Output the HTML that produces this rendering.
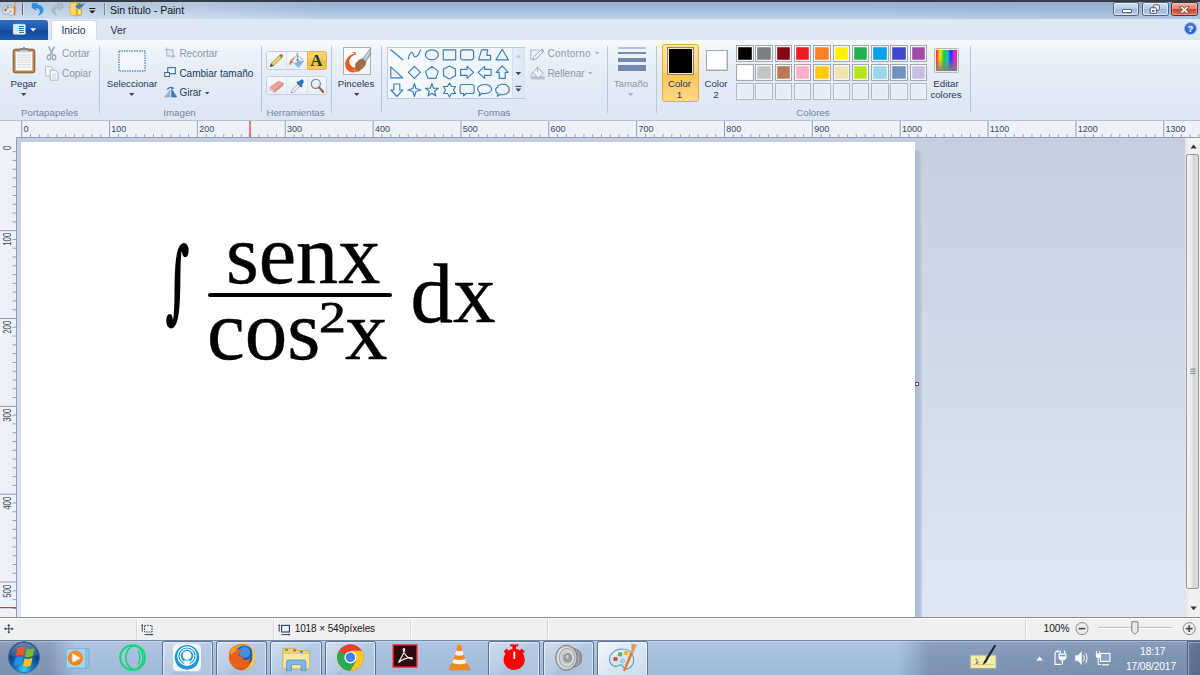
<!DOCTYPE html>
<html lang="es"><head><meta charset="utf-8"><title>Sin título - Paint</title><style>
html,body{margin:0;padding:0}
body{width:1200px;height:675px;overflow:hidden;position:relative;font-family:"Liberation Sans",sans-serif;font-size:10px;color:#1e395b;background:#fff}
.a{position:absolute}
.t{position:absolute;z-index:2;white-space:nowrap;line-height:12px;height:12px;transform-origin:0 50%}
.c{text-align:center}
.dis{color:#92969f}
.grp{color:#74849f}
.sep{position:absolute;width:1px;background:#b9c6d9;top:46px;height:67px}
svg{position:absolute;overflow:visible}
</style></head><body>

<div class="a" style="left:0;top:0;width:1200px;height:19px;background:linear-gradient(180deg,#95b0d2 0,#9db7d6 35%,#b0c7e2 75%,#bdd2e9 100%)"></div>
<div class="a" style="left:0;top:1px;width:330px;height:18px;background:linear-gradient(90deg,rgba(255,255,255,.28) 0,rgba(255,255,255,.26) 190px,rgba(255,255,255,0) 100%)"></div>
<div class="a" style="left:850px;top:1px;width:350px;height:18px;background:linear-gradient(90deg,rgba(60,100,160,0) 0,rgba(60,100,160,.10) 100%)"></div>
<div class="a" style="left:0;top:0;width:1200px;height:1.5px;background:#373b42"></div>
<div class="t" style="left:110px;top:3.5px;font-size:10.5px;color:#101820">Sin título - Paint</div>
<div class="a" style="left:1113.3px;top:2.3px;width:26.2px;height:14.2px;border:1px solid #56627a;background:linear-gradient(#cfdff1,#b4cbe6 48%,#9db9db 52%,#b3cbe6);box-sizing:border-box;border-radius:2.5px;box-shadow:inset 0 0 0 1px rgba(255,255,255,.55)"></div>
<div class="a" style="left:1142.3px;top:2.3px;width:26.4px;height:14.2px;border:1px solid #56627a;background:linear-gradient(#cfdff1,#b4cbe6 48%,#9db9db 52%,#b3cbe6);box-sizing:border-box;border-radius:2.5px;box-shadow:inset 0 0 0 1px rgba(255,255,255,.55)"></div>
<div class="a" style="left:1171.2px;top:2.3px;width:26.6px;height:14.2px;border:1px solid #5e2a24;background:linear-gradient(#eeb5a6,#dc8470 46%,#c4462c 54%,#d9745c);box-sizing:border-box;border-radius:2.5px;box-shadow:inset 0 0 0 1px rgba(255,235,225,.35)"></div>
<div class="a" style="left:1122px;top:9.2px;width:9.6px;height:3.4px;background:#fff;border:1px solid #59657c;border-radius:1px;box-sizing:border-box"></div>
<div class="a" style="left:0;top:19px;width:1200px;height:21px;background:linear-gradient(#dfe9f5,#dbe6f3)"></div>
<div class="a" style="left:0;top:39.5px;width:1200px;height:1px;background:#c9d6e8"></div>
<div class="a" style="left:0;top:20px;width:48px;height:20px;border-radius:0 3px 0 0;background:linear-gradient(#2c6fc4,#1a55a6 50%,#114896 51%,#1e5fb3)"></div>
<div class="a" style="left:51px;top:20px;width:46px;height:21px;border:1px solid #cfdaea;border-bottom:none;border-radius:3px 3px 0 0;box-sizing:border-box;background:linear-gradient(#ffffff,#f7fafd)"></div>
<div class="t" style="left:61.4px;top:24.5px;font-size:10.4px;color:#1e2c60">Inicio</div>
<div class="t" style="left:110.6px;top:24.5px;font-size:10.4px;color:#1e2c60">Ver</div>
<div class="a" style="left:0;top:40px;width:1200px;height:80px;background:linear-gradient(#f7fafd 0,#edf3fa 14%,#e4ecf7 40%,#dce6f3 100%)"></div>
<div class="a" style="left:0;top:120px;width:1200px;height:1px;background:#b4c2d6"></div>
<div class="sep" style="left:99px"></div>
<div class="sep" style="left:261px"></div>
<div class="sep" style="left:331px"></div>
<div class="sep" style="left:381px"></div>
<div class="sep" style="left:607px"></div>
<div class="sep" style="left:656px"></div>
<div class="sep" style="left:970px"></div>
<div class="t c " style="left:-26.5px;top:78px;width:100px;font-size:9.7px;">Pegar</div>
<div class="t dis" style="left:62px;top:48px;">Cortar</div>
<div class="t dis" style="left:62px;top:67.8px;">Copiar</div>
<div class="t c " style="left:82px;top:78px;width:100px;font-size:9.7px;">Seleccionar</div>
<div class="t dis" style="left:179.4px;top:48px;">Recortar</div>
<div class="t " style="left:179.4px;top:67.8px;">Cambiar tamaño</div>
<div class="t " style="left:179.4px;top:86.8px;">Girar</div>
<div class="t c " style="left:306px;top:78px;width:100px;font-size:9.7px;">Pinceles</div>
<div class="t dis" style="left:547.4px;top:48px;letter-spacing:.3px">Contorno</div>
<div class="t dis" style="left:547.4px;top:67.8px;">Rellenar</div>
<div class="t c dis" style="left:581px;top:78px;width:100px;font-size:9.7px;">Tamaño</div>
<div class="t c " style="left:629.5px;top:78px;width:100px;font-size:9.7px;">Color</div>
<div class="t c " style="left:629.5px;top:89px;width:100px;font-size:9.7px;">1</div>
<div class="t c " style="left:666px;top:78px;width:100px;font-size:9.7px;">Color</div>
<div class="t c " style="left:666px;top:89px;width:100px;font-size:9.7px;">2</div>
<div class="t c " style="left:896px;top:78px;width:100px;font-size:9.7px;">Editar</div>
<div class="t c " style="left:896px;top:89px;width:100px;font-size:9.7px;">colores</div>
<div class="t c grp" style="left:-0.5px;top:107px;width:100px;font-size:9.7px;">Portapapeles</div>
<div class="t c grp" style="left:129.5px;top:107px;width:100px;font-size:9.7px;">Imagen</div>
<div class="t c grp" style="left:245.5px;top:107px;width:100px;font-size:9.7px;">Herramientas</div>
<div class="t c grp" style="left:444px;top:107px;width:100px;font-size:9.7px;">Formas</div>
<div class="t c grp" style="left:763px;top:107px;width:100px;font-size:9.7px;">Colores</div>
<div class="a" style="left:387px;top:46.5px;width:138px;height:52px;box-sizing:border-box;border:1px solid #b9c9dd;background:linear-gradient(135deg,#f6f9fd,#edf3fa)"></div>
<div class="a" style="left:512px;top:47.5px;width:12px;height:50px;background:linear-gradient(90deg,#e3ebf6,#dbe5f2);border-left:1px solid #d3deec"></div>
<svg style="left:0px;top:0px" width="1200" height="120" viewBox="0 0 1200 120"><g fill="#edf4fb" fill-opacity=".8" stroke="#3c7db8" stroke-width="1.15" stroke-linejoin="round" stroke-linecap="round"><g transform="translate(396.8,54.8)"><path d="M-6,-5 L6,5"/></g><g transform="translate(414.4,54.8)"><path d="M-6,4 C-5,-3 -2,-4 -1,0 C0,4 4,2 6,-5"/></g><g transform="translate(431.9,54.8)"><ellipse cx="0" cy="0" rx="6.5" ry="5"/></g><g transform="translate(449.5,54.8)"><rect x="-6.2" y="-5" width="12.4" height="10"/></g><g transform="translate(467.1,54.8)"><rect x="-6.5" y="-5" width="13" height="10" rx="2.2"/></g><g transform="translate(484.6,54.8)"><path d="M-6,5 L-3,-5 L3,-5 L2.2,0.5 L6,0.5 L6,5 Z"/></g><g transform="translate(502.2,54.8)"><path d="M0,-5.5 L6.2,5 L-6.2,5 Z"/></g><g transform="translate(396.8,72.4)"><path d="M-6,-5.5 L-6,5.5 L6,5.5 Z"/></g><g transform="translate(414.4,72.4)"><path d="M0,-6 L6,0 L0,6 L-6,0 Z"/></g><g transform="translate(431.9,72.4)"><path d="M0,-6 L6.5,-1 L4,6 L-4,6 L-6.5,-1 Z"/></g><g transform="translate(449.5,72.4)"><path d="M0,-6.5 L6,-3.3 L6,3.3 L0,6.5 L-6,3.3 L-6,-3.3 Z"/></g><g transform="translate(467.1,72.4)"><path d="M-6.5,-3 L0,-3 L0,-6 L6.5,0 L0,6 L0,3 L-6.5,3 Z"/></g><g transform="translate(484.6,72.4)"><path d="M6.5,-3 L0,-3 L0,-6 L-6.5,0 L0,6 L0,3 L6.5,3 Z"/></g><g transform="translate(502.2,72.4)"><path d="M-3,6 L-3,0 L-6,0 L0,-6.5 L6,0 L3,0 L3,6 Z"/></g><g transform="translate(396.8,90.0)"><path d="M-3,-6 L-3,0 L-6,0 L0,6.5 L6,0 L3,0 L3,-6 Z"/></g><g transform="translate(414.4,90.0)"><path d="M0,-6.5 L1.5,-1.5 L6.5,0 L1.5,1.5 L0,6.5 L-1.5,1.5 L-6.5,0 L-1.5,-1.5 Z"/></g><g transform="translate(431.9,90.0)"><path d="M0,-6.5 L1.6,-1.8 L6.5,-1.8 L2.6,1.2 L4,6 L0,3.2 L-4,6 L-2.6,1.2 L-6.5,-1.8 L-1.6,-1.8 Z"/></g><g transform="translate(449.5,90.0)"><path d="M0,-7 L2,-3.5 L6,-3.5 L4,0 L6,3.5 L2,3.5 L0,7 L-2,3.5 L-6,3.5 L-4,0 L-6,-3.5 L-2,-3.5 Z"/></g><g transform="translate(467.1,90.0)"><path d="M-5,-5.5 L5,-5.5 Q7,-5.5 7,-3.5 L7,1.5 Q7,3.5 5,3.5 L-1,3.5 L-3.5,6 L-3.5,3.5 L-5,3.5 Q-7,3.5 -7,1.5 L-7,-3.5 Q-7,-5.5 -5,-5.5 Z"/></g><g transform="translate(484.6,90.0)"><path d="M0,-5.5 C4,-5.5 7,-3.5 7,-1 C7,1.8 4,3.6 0,3.6 C-1,3.6 -2,3.5 -2.8,3.3 L-5.5,6 L-4.8,2.6 C-6.2,1.8 -7,0.6 -7,-1 C-7,-3.5 -4,-5.5 0,-5.5 Z"/></g><g transform="translate(502.2,90.0)"><path d="M-4.6,-2.6 A2.2,2.2 0 0 1 -2,-5 A2.4,2.4 0 0 1 1.6,-5.4 A2.4,2.4 0 0 1 5,-4 A2.2,2.2 0 0 1 6.6,-0.8 A2.2,2.2 0 0 1 5.4,2.6 A2.4,2.4 0 0 1 2,4 A2.4,2.4 0 0 1 -1.6,4.2 L-4.8,6.4 L-4,3.4 A2.2,2.2 0 0 1 -6.2,0.8 A2.2,2.2 0 0 1 -4.6,-2.6 Z"/></g></g><path d="M515.8,57.5 L518.4,54.5 L521,57.5 Z" fill="#b6c0cf"/><path d="M515.6,72 L521.2,72 L518.4,75.2 Z" fill="#3c4757"/><path d="M515.4,86.4 H521.4" stroke="#3c4757" stroke-width="1" fill="none"/><path d="M515.6,88.6 L521.2,88.6 L518.4,91.8 Z" fill="#3c4757"/></svg>
<div class="a" style="left:661.5px;top:44px;width:37px;height:57.5px;box-sizing:border-box;border:1px solid #e8ab3d;border-radius:2.5px;background:linear-gradient(#fde4a8 0,#fcd585 45%,#fbc55a 55%,#fdd98f 100%)"></div>
<div class="a" style="left:666.5px;top:46.5px;width:27.5px;height:28px;box-sizing:border-box;border:1px solid #8f8466;background:#000;box-shadow:inset 0 0 0 1px #f7e2b0"></div>
<div class="a" style="left:668.5px;top:48.5px;width:23.5px;height:24px;background:#000"></div>
<div class="a" style="left:706px;top:50px;width:21.5px;height:21px;box-sizing:border-box;border:1px solid #a5a9ae;background:#fff;box-shadow:inset -1px -1px 0 #d5d8dc"></div>
<div class="a" style="left:736.0px;top:45.0px;width:17.5px;height:17px;box-sizing:border-box;border:1px solid #a3a7ad;background:#000000;box-shadow:inset 0 0 0 1.2px #f4f6f9"></div>
<div class="a" style="left:755.3px;top:45.0px;width:17.5px;height:17px;box-sizing:border-box;border:1px solid #a3a7ad;background:#7f7f7f;box-shadow:inset 0 0 0 1.2px #f4f6f9"></div>
<div class="a" style="left:774.6px;top:45.0px;width:17.5px;height:17px;box-sizing:border-box;border:1px solid #a3a7ad;background:#880015;box-shadow:inset 0 0 0 1.2px #f4f6f9"></div>
<div class="a" style="left:793.9px;top:45.0px;width:17.5px;height:17px;box-sizing:border-box;border:1px solid #a3a7ad;background:#ed1c24;box-shadow:inset 0 0 0 1.2px #f4f6f9"></div>
<div class="a" style="left:813.2px;top:45.0px;width:17.5px;height:17px;box-sizing:border-box;border:1px solid #a3a7ad;background:#ff7f27;box-shadow:inset 0 0 0 1.2px #f4f6f9"></div>
<div class="a" style="left:832.5px;top:45.0px;width:17.5px;height:17px;box-sizing:border-box;border:1px solid #a3a7ad;background:#fff200;box-shadow:inset 0 0 0 1.2px #f4f6f9"></div>
<div class="a" style="left:851.8px;top:45.0px;width:17.5px;height:17px;box-sizing:border-box;border:1px solid #a3a7ad;background:#22b14c;box-shadow:inset 0 0 0 1.2px #f4f6f9"></div>
<div class="a" style="left:871.1px;top:45.0px;width:17.5px;height:17px;box-sizing:border-box;border:1px solid #a3a7ad;background:#00a2e8;box-shadow:inset 0 0 0 1.2px #f4f6f9"></div>
<div class="a" style="left:890.4px;top:45.0px;width:17.5px;height:17px;box-sizing:border-box;border:1px solid #a3a7ad;background:#3f48cc;box-shadow:inset 0 0 0 1.2px #f4f6f9"></div>
<div class="a" style="left:909.7px;top:45.0px;width:17.5px;height:17px;box-sizing:border-box;border:1px solid #a3a7ad;background:#a349a4;box-shadow:inset 0 0 0 1.2px #f4f6f9"></div>
<div class="a" style="left:736.0px;top:64.2px;width:17.5px;height:17px;box-sizing:border-box;border:1px solid #a3a7ad;background:#ffffff;box-shadow:inset 0 0 0 1.2px #f4f6f9"></div>
<div class="a" style="left:755.3px;top:64.2px;width:17.5px;height:17px;box-sizing:border-box;border:1px solid #a3a7ad;background:#c3c3c3;box-shadow:inset 0 0 0 1.2px #f4f6f9"></div>
<div class="a" style="left:774.6px;top:64.2px;width:17.5px;height:17px;box-sizing:border-box;border:1px solid #a3a7ad;background:#b97a57;box-shadow:inset 0 0 0 1.2px #f4f6f9"></div>
<div class="a" style="left:793.9px;top:64.2px;width:17.5px;height:17px;box-sizing:border-box;border:1px solid #a3a7ad;background:#ffaec9;box-shadow:inset 0 0 0 1.2px #f4f6f9"></div>
<div class="a" style="left:813.2px;top:64.2px;width:17.5px;height:17px;box-sizing:border-box;border:1px solid #a3a7ad;background:#ffc90e;box-shadow:inset 0 0 0 1.2px #f4f6f9"></div>
<div class="a" style="left:832.5px;top:64.2px;width:17.5px;height:17px;box-sizing:border-box;border:1px solid #a3a7ad;background:#efe4b0;box-shadow:inset 0 0 0 1.2px #f4f6f9"></div>
<div class="a" style="left:851.8px;top:64.2px;width:17.5px;height:17px;box-sizing:border-box;border:1px solid #a3a7ad;background:#b5e61d;box-shadow:inset 0 0 0 1.2px #f4f6f9"></div>
<div class="a" style="left:871.1px;top:64.2px;width:17.5px;height:17px;box-sizing:border-box;border:1px solid #a3a7ad;background:#99d9ea;box-shadow:inset 0 0 0 1.2px #f4f6f9"></div>
<div class="a" style="left:890.4px;top:64.2px;width:17.5px;height:17px;box-sizing:border-box;border:1px solid #a3a7ad;background:#7092be;box-shadow:inset 0 0 0 1.2px #f4f6f9"></div>
<div class="a" style="left:909.7px;top:64.2px;width:17.5px;height:17px;box-sizing:border-box;border:1px solid #a3a7ad;background:#c8bfe7;box-shadow:inset 0 0 0 1.2px #f4f6f9"></div>
<div class="a" style="left:736.0px;top:83.4px;width:17.5px;height:17px;box-sizing:border-box;border:1px solid #b3b8c0;background:#e6edf7;box-shadow:inset 0 0 0 1px #edf2f9"></div>
<div class="a" style="left:755.3px;top:83.4px;width:17.5px;height:17px;box-sizing:border-box;border:1px solid #b3b8c0;background:#e6edf7;box-shadow:inset 0 0 0 1px #edf2f9"></div>
<div class="a" style="left:774.6px;top:83.4px;width:17.5px;height:17px;box-sizing:border-box;border:1px solid #b3b8c0;background:#e6edf7;box-shadow:inset 0 0 0 1px #edf2f9"></div>
<div class="a" style="left:793.9px;top:83.4px;width:17.5px;height:17px;box-sizing:border-box;border:1px solid #b3b8c0;background:#e6edf7;box-shadow:inset 0 0 0 1px #edf2f9"></div>
<div class="a" style="left:813.2px;top:83.4px;width:17.5px;height:17px;box-sizing:border-box;border:1px solid #b3b8c0;background:#e6edf7;box-shadow:inset 0 0 0 1px #edf2f9"></div>
<div class="a" style="left:832.5px;top:83.4px;width:17.5px;height:17px;box-sizing:border-box;border:1px solid #b3b8c0;background:#e6edf7;box-shadow:inset 0 0 0 1px #edf2f9"></div>
<div class="a" style="left:851.8px;top:83.4px;width:17.5px;height:17px;box-sizing:border-box;border:1px solid #b3b8c0;background:#e6edf7;box-shadow:inset 0 0 0 1px #edf2f9"></div>
<div class="a" style="left:871.1px;top:83.4px;width:17.5px;height:17px;box-sizing:border-box;border:1px solid #b3b8c0;background:#e6edf7;box-shadow:inset 0 0 0 1px #edf2f9"></div>
<div class="a" style="left:890.4px;top:83.4px;width:17.5px;height:17px;box-sizing:border-box;border:1px solid #b3b8c0;background:#e6edf7;box-shadow:inset 0 0 0 1px #edf2f9"></div>
<div class="a" style="left:909.7px;top:83.4px;width:17.5px;height:17px;box-sizing:border-box;border:1px solid #b3b8c0;background:#e6edf7;box-shadow:inset 0 0 0 1px #edf2f9"></div>
<div class="a" style="left:934px;top:47.5px;width:25px;height:25px;box-sizing:border-box;border:1px solid #b9b9b9;border-radius:1.5px;background:#e9e9e9"></div>
<div class="a" style="left:936px;top:49.5px;width:21px;height:21px;background:linear-gradient(rgba(128,128,128,0) 0,rgba(128,128,128,.15) 45%,rgba(128,128,128,.95) 100%),linear-gradient(90deg,#ff2020 0,#ffef00 20%,#18d820 38%,#10c8d8 55%,#1830ff 70%,#e020e0 88%,#ff2060 100%)"></div>
<div class="a" style="left:617.5px;top:47px;width:28.5px;height:1.6px;background:#b9c3d6"></div>
<div class="a" style="left:617.5px;top:51.5px;width:28.5px;height:2px;background:#7d8eb0"></div>
<div class="a" style="left:617.5px;top:58px;width:28.5px;height:3.6px;background:#7688ad"></div>
<div class="a" style="left:617.5px;top:65px;width:28.5px;height:6px;background:#7587ac"></div>
<svg style="left:20.6px;top:92.7px" width="5.4" height="3" viewBox="0 0 5.4 3"><path d="M0,0 L5.4,0 L2.7,3 Z" fill="#3d4756"/></svg>
<svg style="left:128.6px;top:92.7px" width="5.4" height="3" viewBox="0 0 5.4 3"><path d="M0,0 L5.4,0 L2.7,3 Z" fill="#3d4756"/></svg>
<svg style="left:353.5px;top:92.7px" width="5.4" height="3" viewBox="0 0 5.4 3"><path d="M0,0 L5.4,0 L2.7,3 Z" fill="#3d4756"/></svg>
<svg style="left:628.3px;top:92.7px" width="5.4" height="3" viewBox="0 0 5.4 3"><path d="M0,0 L5.4,0 L2.7,3 Z" fill="#a9b0bc"/></svg>
<svg style="left:205.1px;top:91.8px" width="4.4" height="2.4" viewBox="0 0 4.4 2.4"><path d="M0,0 L4.4,0 L2.2,2.4 Z" fill="#3d4756"/></svg>
<svg style="left:595.2px;top:52px" width="4.4" height="2.4" viewBox="0 0 4.4 2.4"><path d="M0,0 L4.4,0 L2.2,2.4 Z" fill="#a9b0bc"/></svg>
<svg style="left:588.2px;top:71.8px" width="4.4" height="2.4" viewBox="0 0 4.4 2.4"><path d="M0,0 L4.4,0 L2.2,2.4 Z" fill="#a9b0bc"/></svg>
<svg style="left:1.5px;top:1.5px" width="16" height="15" viewBox="0 0 16 15"><path d="M6.4,3.4 C2.6,3.6 0.2,6.2 0.6,9.2 C0.9,11.8 3.2,12.8 5,11.8 C6.2,11 7.2,11.6 7.6,12.8 C8.2,14.4 10.8,14 12,11.8 C13.6,8.8 12.4,3.2 6.4,3.4 Z" fill="#dce8f3" stroke="#86a0ba" stroke-width=".8"/><circle cx="3.6" cy="8" r="1.4" fill="#e0503c"/><circle cx="5.8" cy="5.6" r="1.3" fill="#58b048"/><circle cx="9" cy="5.4" r="1.2" fill="#e8b83c"/><circle cx="8.4" cy="9.4" r="1.2" fill="#86b4e0"/><path d="M12.2,0.4 L14.6,0.8 L13.4,4.2 L12.4,4 Z" fill="#dca868"/><path d="M11.8,4 L13.6,4.2 L13.4,12.6 Q12.6,14.2 11.6,12.6 Z" fill="#e8781c"/></svg>
<div class="a" style="left:22px;top:3px;width:1px;height:12px;background:#5a6472"></div>
<div class="a" style="left:23px;top:3px;width:1px;height:12px;background:#d4e0ee"></div>
<div class="a" style="left:104px;top:3px;width:1px;height:12px;background:#7c8898"></div>
<div class="a" style="left:105px;top:3px;width:1px;height:12px;background:#d4e0ee"></div>
<svg style="left:31px;top:2px" width="14" height="14" viewBox="0 0 14 14"><path d="M1,1.6 L6.4,1.2 L5.2,3 C9.6,2.4 12.6,5.4 12.2,8.6 C11.8,11.4 9.6,12.8 7.2,13.2 C9,11.6 9.6,9.8 8.8,8 C8,6.4 6.4,5.8 4.4,6.2 L5.4,8.2 L1,5.6 Z" fill="#2f8fe0" stroke="#2a78c8" stroke-width=".5"/></svg>
<svg style="left:50px;top:2px" width="14" height="14" viewBox="0 0 14 14"><path d="M13,1.6 L7.6,1.2 L8.8,3 C4.4,2.4 1.4,5.4 1.8,8.6 C2.2,11.4 4.4,12.8 6.8,13.2 C5,11.6 4.4,9.8 5.2,8 C6,6.4 7.6,5.8 9.6,6.2 L8.6,8.2 L13,5.6 Z" fill="#a9b9cf" stroke="#9aabc4" stroke-width=".5"/></svg>
<svg style="left:69px;top:2px" width="16" height="15" viewBox="0 0 16 15"><path d="M1,1.2 L7.4,0.2 L7.4,14 L1,13 Z" fill="#f5d76c" stroke="#c9a030" stroke-width=".6"/><path d="M7.4,0.2 L12.6,1.2 L12.6,13 L7.4,14 Z" fill="#e6b434" stroke="#c9a030" stroke-width=".6"/><path d="M9.6,5 L9.6,12.4 L11.6,12 L11.6,5 Z" fill="#f8ecb0"/><path d="M15.4,1.4 C14.4,3.8 12.6,5.2 10.8,5.4 L11.4,7.4 L6.6,4.4 L11.2,0.8 L10.6,3 C12.4,3 14,2.4 15.4,1.4 Z" fill="#2a80dc" stroke="#1c60b4" stroke-width=".4"/></svg>
<svg style="left:89px;top:8px" width="7" height="6" viewBox="0 0 7 6"><path d="M0.2,0.5 H6.4" stroke="#16191d" stroke-width="1"/><path d="M0.2,2.4 L6.4,2.4 L3.3,5.4 Z" fill="#16191d"/></svg>
<svg style="left:13px;top:24px" width="13" height="11" viewBox="0 0 13 11"><rect x="0.3" y="0.3" width="12" height="10" rx="0.8" fill="#f4f7fb" stroke="#cfdcf0" stroke-width=".6"/><rect x="0.8" y="0.8" width="4" height="9" fill="#dfe6f0"/><path d="M6,2.4 H11 M6,4.4 H11 M6,6.4 H11 M6,8.4 H11" stroke="#2a5fa8" stroke-width="1"/></svg>
<svg style="left:30px;top:28px" width="7" height="4" viewBox="0 0 7 4"><path d="M0.2,0.2 L6.2,0.2 L3.2,3.4 Z" fill="#fff"/></svg>
<svg style="left:1147px;top:4px" width="16" height="11" viewBox="0 0 16 11"><rect x="6.4" y="0.8" width="6" height="5.4" rx="1" fill="#e8eef6" stroke="#59657c" stroke-width="1"/><rect x="3.2" y="3.8" width="6.2" height="5.6" rx=".6" fill="#fff" stroke="#4a566c" stroke-width="1"/><rect x="5" y="6" width="2.6" height="1.8" fill="#59657c"/></svg>
<svg style="left:1179.4px;top:5.6px" width="11" height="8" viewBox="0 0 11 8"><path d="M0.6,0.6 L3.6,0.6 L5.4,2.4 L7.2,0.6 L10.2,0.6 L7.2,3.8 L10.4,7.2 L7.2,7.2 L5.4,5.2 L3.6,7.2 L0.4,7.2 L3.6,3.8 Z" fill="#fff" stroke="#6a342c" stroke-width=".7" stroke-linejoin="round"/></svg>
<svg style="left:1184px;top:22px" width="13" height="13" viewBox="0 0 13 13"><circle cx="6.5" cy="6.5" r="6" fill="#2a66c8" stroke="#9fb8e0" stroke-width="1"/><circle cx="6.5" cy="5" r="4" fill="#4d8ae0" opacity=".6"/></svg>
<div class="t" style="left:1187.6px;top:22.5px;font-size:9.5px;font-weight:bold;color:#fff">?</div>
<svg style="left:12px;top:46px" width="24" height="28" viewBox="0 0 24 28"><rect x="1.2" y="3.2" width="21.6" height="23.6" rx="2" fill="#b9824a" stroke="#8a5a2c" stroke-width="1"/><rect x="3.6" y="5.6" width="16.8" height="19" fill="#fbfbfb" stroke="#c8c0b4" stroke-width=".6"/><path d="M5,9 H19 M5,11.4 H19 M5,13.8 H19 M5,16.2 H19 M5,18.6 H19 M5,21 H19" stroke="#c9cdd4" stroke-width=".8"/><path d="M7,5.8 L8.4,2.6 L10.6,2.6 Q12,0 13.4,2.6 L15.6,2.6 L17,5.8 Z" fill="#8e9298" stroke="#5e6268" stroke-width=".7"/><rect x="7.4" y="4.6" width="9.2" height="1.4" fill="#d8dade"/></svg>
<svg style="left:46px;top:46px" width="11" height="15" viewBox="0 0 11 15"><path d="M2.6,0.6 L6.6,8.6 M8.4,0.6 L4.4,8.6" stroke="#9aa9c0" stroke-width="1.5" fill="none"/><ellipse cx="3" cy="11.4" rx="1.8" ry="2.4" fill="none" stroke="#9aa9c0" stroke-width="1.3"/><ellipse cx="8" cy="11.4" rx="1.8" ry="2.4" fill="none" stroke="#9aa9c0" stroke-width="1.3"/></svg>
<svg style="left:45px;top:66px" width="14" height="15" viewBox="0 0 14 15"><path d="M0.6,0.6 L5.6,0.6 L8,3 L8,10 L0.6,10 Z" fill="#f4f7fb" stroke="#b4bfd0" stroke-width="1"/><path d="M5.2,4.2 L10.4,4.2 L13,6.8 L13,14.2 L5.2,14.2 Z" fill="#f8fafd" stroke="#aab6c8" stroke-width="1"/><path d="M7,8 H11 M7,10 H11 M7,12 H11" stroke="#c2cbd9" stroke-width=".8"/></svg>
<svg style="left:118px;top:50px" width="28" height="22" viewBox="0 0 28 22"><rect x="1" y="1" width="26" height="20" fill="#f1f6fc" stroke="#1f5fa6" stroke-width="1" stroke-dasharray="1.5 1"/></svg>
<svg style="left:164.3px;top:46.8px" width="12" height="12" viewBox="0 0 14 14"><path d="M3.4,0.6 V10.6 H13.4 M0.6,3.4 H10.6 V13.4" stroke="#9ba8bc" stroke-width="1.1" fill="none"/><path d="M4.6,9.4 L9.4,4.6" stroke="#b4bfcf" stroke-width=".9"/></svg>
<svg style="left:164.2px;top:66.8px" width="12" height="11.2" viewBox="0 0 14 13"><rect x="4.4" y="0.8" width="8.8" height="7" fill="#f2f7fd" stroke="#2a60a8" stroke-width="1.2"/><rect x="0.8" y="6.4" width="5.6" height="4.6" fill="#f2f7fd" stroke="#2a60a8" stroke-width="1.1"/></svg>
<svg style="left:163.6px;top:85.6px" width="14.6" height="12" viewBox="0 0 16 13"><path d="M0.6,12 L6.6,4.4 L6.6,12 Z" fill="#aab3c0" stroke="#8b95a4" stroke-width=".5"/><path d="M8.4,12 L8.4,3.4 L14,12 Z" fill="#3a7bd0" stroke="#2a5fa8" stroke-width=".6"/><path d="M3.6,4 C4.6,1.6 7.4,1 9.4,2" stroke="#2a7bd8" stroke-width="1.2" fill="none"/><path d="M8.4,0.2 L11.4,2.6 L8,3.8 Z" fill="#2a7bd8"/></svg>
<div class="a" style="left:266px;top:50.8px;width:60.6px;height:19.2px;box-sizing:border-box;border:1px solid #c3d0e2;border-radius:2.5px;background:linear-gradient(#f4f8fc,#e6eef8)"></div>
<div class="a" style="left:285.6px;top:51.8px;width:1px;height:17.2px;background:#d7e0ed"></div>
<div class="a" style="left:306.8px;top:51.8px;width:1px;height:17.2px;background:#d7e0ed"></div>
<div class="a" style="left:266px;top:76.3px;width:60.6px;height:19.2px;box-sizing:border-box;border:1px solid #c3d0e2;border-radius:2.5px;background:linear-gradient(#f4f8fc,#e6eef8)"></div>
<div class="a" style="left:285.6px;top:77.3px;width:1px;height:17.2px;background:#d7e0ed"></div>
<div class="a" style="left:306.8px;top:77.3px;width:1px;height:17.2px;background:#d7e0ed"></div>
<div class="a" style="left:307.3px;top:50.8px;width:19.4px;height:19.2px;box-sizing:border-box;border:1px solid #eab347;border-radius:0 2.5px 2.5px 0;background:linear-gradient(#fbd27d 0,#fbc960 45%,#f9b944 52%,#fbc65c 100%)"></div>
<svg style="left:269px;top:53px" width="16" height="15" viewBox="0 0 16 15"><path d="M1,13.8 L2.2,10.4 L10.8,2 L13.2,4.2 L4.4,12.8 Z" fill="#f1cf63" stroke="#8c7a40" stroke-width=".7"/><path d="M1,13.8 L2.2,10.4 L4.4,12.8 Z" fill="#4a4a4a"/><path d="M10.8,2 L12,0.8 L14.4,3 L13.2,4.2 Z" fill="#d84858"/><path d="M10.2,2.6 L12.6,4.8" stroke="#58a058" stroke-width="1"/></svg>
<svg style="left:289px;top:51.5px" width="16" height="17" viewBox="0 0 16 17"><path d="M3.4,7 C1.2,8 0.2,10.6 0.8,14 C1.8,11.6 3,10.4 4.6,9.6 Z" fill="#ea5a1e"/><path d="M2.6,7.6 C3.6,6 5.2,5.2 6.6,5.4 L4.4,8.6 Z" fill="#f07838"/><path d="M8,3 L14.8,9 L9.4,15.6 L2.8,9 Z" fill="#eef4fb" stroke="#7c9cc8" stroke-width=".8"/><path d="M5.4,11 L9.4,15 L14,9.4 L10.6,8.6 Z" fill="#74a8e0" opacity=".9"/><path d="M8.4,1.2 L8.6,8" stroke="#9a9ea4" stroke-width="1.3"/><circle cx="8.6" cy="8.2" r="1.1" fill="#7c8086"/><circle cx="8.4" cy="1.6" r="1.1" fill="#b4b8bc"/></svg>
<div class="t" style="left:310.3px;top:54px;font-family:'Liberation Serif',serif;font-weight:bold;font-size:17px;line-height:14px;height:14px;color:#1c3456">A</div>
<svg style="left:269.4px;top:79.8px" width="15.6" height="12.8" viewBox="0 0 17 14"><path d="M1,8.2 L10.4,1.2 L15.6,3.6 L6.4,11 Z" fill="#f2a1a1" stroke="#d07c7c" stroke-width=".6"/><path d="M1,8.2 L6.4,11 L6.2,13.4 L1,10.8 Z" fill="#f6c4b4" stroke="#d08c7c" stroke-width=".5"/><path d="M6.4,11 L15.6,3.6 L15.4,6 L6.2,13.4 Z" fill="#e48c8c" stroke="#c87878" stroke-width=".5"/></svg>
<svg style="left:290px;top:78px" width="14" height="16" viewBox="0 0 14 16"><path d="M1,15 L2,12 L8,6 L10,8 L4,14 Z" fill="#eef2f6" stroke="#8a96a4" stroke-width=".7"/><path d="M6.8,4.8 L11.2,9.2 L12.4,8 L11.4,7 L13.2,4.4 C14,3 12.6,1.2 11,2 L8.6,4 L7.8,3.4 Z" fill="#2f74c4" stroke="#1f5498" stroke-width=".6"/></svg>
<svg style="left:310px;top:78px" width="15" height="16" viewBox="0 0 15 16"><circle cx="5.8" cy="5.8" r="4.6" fill="#e4effb" stroke="#6f7f92" stroke-width="1.1"/><path d="M9.2,9.4 L13.2,14" stroke="#9a6038" stroke-width="2.2" stroke-linecap="round"/></svg>
<div class="a" style="left:342.5px;top:46.5px;width:28.5px;height:28.5px;box-sizing:border-box;border:1px solid #b0b0b0;background:linear-gradient(135deg,#ffffff,#eef2f3)"></div>
<svg style="left:343px;top:47px" width="28" height="28" viewBox="0 0 28 28"><path d="M12.6,5.4 C11.4,4.4 9.8,4.6 9.4,5.6 C10.6,5.2 11.4,5.8 11.2,6.8 C6.4,7.6 1.8,12.6 2.2,18.2 C2.6,22.6 6.4,25.4 10.8,25.6 L15.6,20.6 C12,21.4 7.6,20 6.6,16.4 C5.6,12.4 8.6,8.4 12.6,7.6 C13.4,7 13.4,6 12.6,5.4 Z" fill="#ea5a1e"/><path d="M7.2,22.6 C9.6,24.8 13.4,25.8 16.6,24.2 L18.6,20.8 L14,19.4 C12.4,21.2 9.8,22.4 7.2,22.6 Z" fill="#f2703c"/><path d="M12.8,21.4 C11.4,17.6 14,13.4 18.4,12.2 C21.4,11.6 23.4,13.6 22.6,16.6 C21.6,20.2 18,23.4 14.4,23 Z" fill="#a06e3e" stroke="#7a5028" stroke-width=".5"/><path d="M19.4,12 L27.6,1.6 L27.6,7 L22.8,14.6 Z" fill="#b4c0d0" stroke="#5c6878" stroke-width=".6"/><path d="M21,12.4 L27.4,3.6" stroke="#e4eaf2" stroke-width="1"/></svg>
<svg style="left:530px;top:48px" width="15" height="14" viewBox="0 0 15 14"><path d="M0.8,2 H9 M0.8,2 V12" stroke="#a9b4c6" stroke-width="1.1" fill="none"/><path d="M2.6,12.2 L3.6,9 L10.8,2 L13,4.2 L5.8,11.2 Z" fill="#f1f4f8" stroke="#9aa6b9" stroke-width="1"/><path d="M10.8,2 L12.2,0.8 L14.2,3 L13,4.2 Z" fill="#9aa6b9"/></svg>
<svg style="left:530px;top:66px" width="16" height="15" viewBox="0 0 16 15"><path d="M1,13.4 H14.6 V10.4 L1,10.4 Z" fill="#b8c2d2"/><path d="M7.4,1.6 L13.4,7.2 L8.4,12 L2.6,6.8 Z" fill="#eef2f8" stroke="#a4afc2" stroke-width="1"/><path d="M7.6,0.4 V6" stroke="#aab4c4" stroke-width="1"/><path d="M2.6,6.8 C1.2,8 0.8,9.8 1,11.4" stroke="#a4afc2" stroke-width="1" fill="none"/></svg>
<div class="a" style="left:0;top:121px;width:1200px;height:17px;background:#eef1f8"></div>
<div class="a" style="left:0;top:138px;width:1200px;height:479px;background:linear-gradient(#c3cfe1,#dee8f4)"></div>
<div class="a" style="left:0;top:138px;width:16px;height:479px;background:#eef1f8"></div>
<div class="a" style="left:20.5px;top:142px;width:894.5px;height:475px;background:#fff"></div>
<div class="a" style="left:915px;top:149.5px;width:7px;height:467.5px;background:linear-gradient(90deg,#a9b9d3,#bfcbe0)"></div>
<svg style="left:0px;top:0px" width="1200" height="675" viewBox="0 0 1200 675"><g stroke="#8f9fba" stroke-width="1" fill="none"><path d="M21.70,121 V138"/><path d="M30.48,134.2 V138"/><path d="M39.27,134.2 V138"/><path d="M48.05,134.2 V138"/><path d="M56.84,134.2 V138"/><path d="M65.62,134.2 V138"/><path d="M74.41,134.2 V138"/><path d="M83.19,134.2 V138"/><path d="M91.98,134.2 V138"/><path d="M100.77,134.2 V138"/><path d="M109.55,121 V138"/><path d="M118.33,134.2 V138"/><path d="M127.12,134.2 V138"/><path d="M135.91,134.2 V138"/><path d="M144.69,134.2 V138"/><path d="M153.47,134.2 V138"/><path d="M162.26,134.2 V138"/><path d="M171.04,134.2 V138"/><path d="M179.83,134.2 V138"/><path d="M188.61,134.2 V138"/><path d="M197.40,121 V138"/><path d="M206.18,134.2 V138"/><path d="M214.97,134.2 V138"/><path d="M223.75,134.2 V138"/><path d="M232.54,134.2 V138"/><path d="M241.32,134.2 V138"/><path d="M250.11,134.2 V138"/><path d="M258.89,134.2 V138"/><path d="M267.68,134.2 V138"/><path d="M276.46,134.2 V138"/><path d="M285.25,121 V138"/><path d="M294.03,134.2 V138"/><path d="M302.82,134.2 V138"/><path d="M311.60,134.2 V138"/><path d="M320.39,134.2 V138"/><path d="M329.17,134.2 V138"/><path d="M337.96,134.2 V138"/><path d="M346.74,134.2 V138"/><path d="M355.53,134.2 V138"/><path d="M364.31,134.2 V138"/><path d="M373.10,121 V138"/><path d="M381.88,134.2 V138"/><path d="M390.67,134.2 V138"/><path d="M399.45,134.2 V138"/><path d="M408.24,134.2 V138"/><path d="M417.02,134.2 V138"/><path d="M425.81,134.2 V138"/><path d="M434.59,134.2 V138"/><path d="M443.38,134.2 V138"/><path d="M452.16,134.2 V138"/><path d="M460.95,121 V138"/><path d="M469.73,134.2 V138"/><path d="M478.52,134.2 V138"/><path d="M487.30,134.2 V138"/><path d="M496.09,134.2 V138"/><path d="M504.87,134.2 V138"/><path d="M513.66,134.2 V138"/><path d="M522.44,134.2 V138"/><path d="M531.23,134.2 V138"/><path d="M540.01,134.2 V138"/><path d="M548.80,121 V138"/><path d="M557.59,134.2 V138"/><path d="M566.37,134.2 V138"/><path d="M575.15,134.2 V138"/><path d="M583.94,134.2 V138"/><path d="M592.73,134.2 V138"/><path d="M601.51,134.2 V138"/><path d="M610.29,134.2 V138"/><path d="M619.08,134.2 V138"/><path d="M627.87,134.2 V138"/><path d="M636.65,121 V138"/><path d="M645.44,134.2 V138"/><path d="M654.22,134.2 V138"/><path d="M663.00,134.2 V138"/><path d="M671.79,134.2 V138"/><path d="M680.58,134.2 V138"/><path d="M689.36,134.2 V138"/><path d="M698.14,134.2 V138"/><path d="M706.93,134.2 V138"/><path d="M715.72,134.2 V138"/><path d="M724.50,121 V138"/><path d="M733.28,134.2 V138"/><path d="M742.07,134.2 V138"/><path d="M750.86,134.2 V138"/><path d="M759.64,134.2 V138"/><path d="M768.42,134.2 V138"/><path d="M777.21,134.2 V138"/><path d="M786.00,134.2 V138"/><path d="M794.78,134.2 V138"/><path d="M803.57,134.2 V138"/><path d="M812.35,121 V138"/><path d="M821.13,134.2 V138"/><path d="M829.92,134.2 V138"/><path d="M838.71,134.2 V138"/><path d="M847.49,134.2 V138"/><path d="M856.27,134.2 V138"/><path d="M865.06,134.2 V138"/><path d="M873.85,134.2 V138"/><path d="M882.63,134.2 V138"/><path d="M891.41,134.2 V138"/><path d="M900.20,121 V138"/><path d="M908.99,134.2 V138"/><path d="M917.77,134.2 V138"/><path d="M926.55,134.2 V138"/><path d="M935.34,134.2 V138"/><path d="M944.12,134.2 V138"/><path d="M952.91,134.2 V138"/><path d="M961.69,134.2 V138"/><path d="M970.48,134.2 V138"/><path d="M979.26,134.2 V138"/><path d="M988.05,121 V138"/><path d="M996.84,134.2 V138"/><path d="M1005.62,134.2 V138"/><path d="M1014.40,134.2 V138"/><path d="M1023.19,134.2 V138"/><path d="M1031.97,134.2 V138"/><path d="M1040.76,134.2 V138"/><path d="M1049.55,134.2 V138"/><path d="M1058.33,134.2 V138"/><path d="M1067.12,134.2 V138"/><path d="M1075.90,121 V138"/><path d="M1084.68,134.2 V138"/><path d="M1093.47,134.2 V138"/><path d="M1102.25,134.2 V138"/><path d="M1111.04,134.2 V138"/><path d="M1119.83,134.2 V138"/><path d="M1128.61,134.2 V138"/><path d="M1137.39,134.2 V138"/><path d="M1146.18,134.2 V138"/><path d="M1154.96,134.2 V138"/><path d="M1163.75,121 V138"/><path d="M1172.54,134.2 V138"/><path d="M1181.32,134.2 V138"/><path d="M1190.11,134.2 V138"/><path d="M1198.89,134.2 V138"/><path d="M12.6,151.59 H16.5"/><path d="M12.6,160.37 H16.5"/><path d="M12.6,169.16 H16.5"/><path d="M12.6,177.94 H16.5"/><path d="M12.6,186.73 H16.5"/><path d="M12.6,195.51 H16.5"/><path d="M12.6,204.30 H16.5"/><path d="M12.6,213.08 H16.5"/><path d="M12.6,221.87 H16.5"/><path d="M0,230.65 H16.5"/><path d="M12.6,239.44 H16.5"/><path d="M12.6,248.22 H16.5"/><path d="M12.6,257.00 H16.5"/><path d="M12.6,265.79 H16.5"/><path d="M12.6,274.58 H16.5"/><path d="M12.6,283.36 H16.5"/><path d="M12.6,292.14 H16.5"/><path d="M12.6,300.93 H16.5"/><path d="M12.6,309.72 H16.5"/><path d="M0,318.50 H16.5"/><path d="M12.6,327.28 H16.5"/><path d="M12.6,336.07 H16.5"/><path d="M12.6,344.86 H16.5"/><path d="M12.6,353.64 H16.5"/><path d="M12.6,362.43 H16.5"/><path d="M12.6,371.21 H16.5"/><path d="M12.6,380.00 H16.5"/><path d="M12.6,388.78 H16.5"/><path d="M12.6,397.56 H16.5"/><path d="M0,406.35 H16.5"/><path d="M12.6,415.13 H16.5"/><path d="M12.6,423.92 H16.5"/><path d="M12.6,432.70 H16.5"/><path d="M12.6,441.49 H16.5"/><path d="M12.6,450.27 H16.5"/><path d="M12.6,459.06 H16.5"/><path d="M12.6,467.84 H16.5"/><path d="M12.6,476.63 H16.5"/><path d="M12.6,485.41 H16.5"/><path d="M0,494.20 H16.5"/><path d="M12.6,502.99 H16.5"/><path d="M12.6,511.77 H16.5"/><path d="M12.6,520.56 H16.5"/><path d="M12.6,529.34 H16.5"/><path d="M12.6,538.12 H16.5"/><path d="M12.6,546.91 H16.5"/><path d="M12.6,555.69 H16.5"/><path d="M12.6,564.48 H16.5"/><path d="M12.6,573.26 H16.5"/><path d="M0,582.05 H16.5"/><path d="M12.6,590.84 H16.5"/><path d="M12.6,599.62 H16.5"/><path d="M12.6,608.40 H16.5"/><path d="M16.5,137.5 H1200"/><path d="M16.5,137.5 V617"/></g><path d="M250,121 V137" stroke="#e03030" stroke-width="1.2"/><path d="M0,607.6 H16" stroke="#e03030" stroke-width="1.2"/></svg>
<div class="t " style="left:23.5px;top:122.8px;font-size:9px;color:#3c4862">0</div>
<div class="t " style="left:111.35px;top:122.8px;font-size:9px;color:#3c4862">100</div>
<div class="t " style="left:199.2px;top:122.8px;font-size:9px;color:#3c4862">200</div>
<div class="t " style="left:287.05px;top:122.8px;font-size:9px;color:#3c4862">300</div>
<div class="t " style="left:374.9px;top:122.8px;font-size:9px;color:#3c4862">400</div>
<div class="t " style="left:462.75px;top:122.8px;font-size:9px;color:#3c4862">500</div>
<div class="t " style="left:550.6px;top:122.8px;font-size:9px;color:#3c4862">600</div>
<div class="t " style="left:638.45px;top:122.8px;font-size:9px;color:#3c4862">700</div>
<div class="t " style="left:726.3px;top:122.8px;font-size:9px;color:#3c4862">800</div>
<div class="t " style="left:814.15px;top:122.8px;font-size:9px;color:#3c4862">900</div>
<div class="t " style="left:902px;top:122.8px;font-size:9px;color:#3c4862">1000</div>
<div class="t " style="left:989.85px;top:122.8px;font-size:9px;color:#3c4862">1100</div>
<div class="t " style="left:1077.7px;top:122.8px;font-size:9px;color:#3c4862">1200</div>
<div class="t " style="left:1165.55px;top:122.8px;font-size:9px;color:#3c4862">1300</div>
<div class="t" style="left:0.7px;top:141.5px;font-size:9px;color:#3c4862;width:30px;text-align:right;transform-origin:0 0;transform:translate(0,30px) rotate(-90deg) scale(.88,1.12)">0</div>
<div class="t" style="left:0.7px;top:229.3px;font-size:9px;color:#3c4862;width:30px;text-align:right;transform-origin:0 0;transform:translate(0,30px) rotate(-90deg) scale(.88,1.12)">100</div>
<div class="t" style="left:0.7px;top:317.2px;font-size:9px;color:#3c4862;width:30px;text-align:right;transform-origin:0 0;transform:translate(0,30px) rotate(-90deg) scale(.88,1.12)">200</div>
<div class="t" style="left:0.7px;top:405.1px;font-size:9px;color:#3c4862;width:30px;text-align:right;transform-origin:0 0;transform:translate(0,30px) rotate(-90deg) scale(.88,1.12)">300</div>
<div class="t" style="left:0.7px;top:492.9px;font-size:9px;color:#3c4862;width:30px;text-align:right;transform-origin:0 0;transform:translate(0,30px) rotate(-90deg) scale(.88,1.12)">400</div>
<div class="t" style="left:0.7px;top:580.8px;font-size:9px;color:#3c4862;width:30px;text-align:right;transform-origin:0 0;transform:translate(0,30px) rotate(-90deg) scale(.88,1.12)">500</div>
<div class="a" style="left:915px;top:382px;width:4px;height:4px;box-sizing:border-box;border:1px solid #555;background:#fff"></div>
<div class="a" style="left:1185px;top:138px;width:15px;height:479px;background:linear-gradient(90deg,#e4e4e4,#f2f2f2 30%,#f0f0f0)"></div>
<div class="a" style="left:1186.3px;top:154.4px;width:12.4px;height:435px;box-sizing:border-box;border:1px solid #979797;border-radius:2px;background:linear-gradient(90deg,#f4f4f4 0,#e9e9ea 45%,#d6d6d8 55%,#dcdcde 100%)"></div>
<svg style="left:1189.8px;top:143.6px" width="8" height="5" viewBox="0 0 8 5"><path d="M0.4,4.4 L3.6,0.6 L6.8,4.4 Z" fill="#30363e"/></svg>
<svg style="left:1189.8px;top:606.4px" width="8" height="5" viewBox="0 0 8 5"><path d="M0.4,0.4 L3.6,4.2 L6.8,0.4 Z" fill="#30363e"/></svg>
<svg style="left:1189.6px;top:368.4px" width="7" height="7" viewBox="0 0 7 7"><path d="M0.4,1 H5.6 M0.4,3.2 H5.6 M0.4,5.4 H5.6" stroke="#7c8088" stroke-width="1"/></svg>
<div class="a" style="left:225.5px;top:204px;font-size:85px;transform:scaleX(.99);transform-origin:0 0;font-family:'Liberation Serif',serif;color:#000;white-space:nowrap;line-height:100px;-webkit-text-stroke:.45px #000;">senx</div>
<div class="a" style="left:207px;top:279.5px;font-size:85px;font-family:'Liberation Serif',serif;color:#000;white-space:nowrap;line-height:100px;-webkit-text-stroke:.45px #000;">cos</div>
<div class="a" style="left:319px;top:267.5px;font-size:44px;transform:scaleX(1.22);transform-origin:0 0;font-family:'Liberation Serif',serif;color:#000;white-space:nowrap;line-height:100px;-webkit-text-stroke:.45px #000;-webkit-text-stroke:.8px #000">2</div>
<div class="a" style="left:345px;top:279.5px;font-size:85px;font-family:'Liberation Serif',serif;color:#000;white-space:nowrap;line-height:100px;-webkit-text-stroke:.45px #000;">x</div>
<div class="a" style="left:410.5px;top:243px;font-size:85px;font-family:'Liberation Serif',serif;color:#000;white-space:nowrap;line-height:100px;-webkit-text-stroke:.45px #000;">dx</div>
<div class="a" style="left:208px;top:292.5px;width:183.5px;height:4.5px;border-radius:2.5px;background:#000"></div>
<div class="a" style="left:165.6px;top:230.6px;font-size:88px;font-family:'DejaVu Serif',serif;color:#000;line-height:100px;transform:scaleX(.5);transform-origin:0 0;-webkit-text-stroke:3px #000">∫</div>
<div class="a" style="left:0;top:617px;width:1200px;height:23px;background:#f1efef;border-top:1px solid #8c8c8c;box-sizing:border-box;box-shadow:inset 0 1px 0 #fbfbfb"></div>
<div class="a" style="left:136px;top:619px;width:1px;height:20px;background:#d9d7d7"></div>
<div class="a" style="left:137px;top:619px;width:1px;height:20px;background:#fbfbfb"></div>
<div class="a" style="left:273px;top:619px;width:1px;height:20px;background:#d9d7d7"></div>
<div class="a" style="left:274px;top:619px;width:1px;height:20px;background:#fbfbfb"></div>
<div class="a" style="left:410px;top:619px;width:1px;height:20px;background:#d9d7d7"></div>
<div class="a" style="left:411px;top:619px;width:1px;height:20px;background:#fbfbfb"></div>
<div class="a" style="left:547px;top:619px;width:1px;height:20px;background:#d9d7d7"></div>
<div class="a" style="left:548px;top:619px;width:1px;height:20px;background:#fbfbfb"></div>
<div class="a" style="left:1024.5px;top:619px;width:1px;height:20px;background:#d9d7d7"></div>
<div class="a" style="left:1025.5px;top:619px;width:1px;height:20px;background:#fbfbfb"></div>
<div class="t " style="left:294.7px;top:623.4px;font-size:10px;color:#16181c;letter-spacing:-0.1px">1018 × 549píxeles</div>
<div class="t " style="left:1043.5px;top:623.2px;font-size:10.2px;color:#16181c">100%</div>
<svg style="left:3.8px;top:624.2px" width="9.6" height="9.6" viewBox="0 0 11 11"><path d="M5.5,1 V10 M1,5.5 H10" stroke="#2b3f5c" stroke-width="1.1"/><path d="M5.5,0 L7.3,2.2 L3.7,2.2 Z M5.5,11 L7.3,8.8 L3.7,8.8 Z M0,5.5 L2.2,3.7 L2.2,7.3 Z M11,5.5 L8.8,3.7 L8.8,7.3 Z" fill="#2b3f5c"/></svg>
<svg style="left:141px;top:623.6px" width="13" height="13" viewBox="0 0 13 13"><rect x="3.6" y="1.4" width="7.4" height="6.6" fill="none" stroke="#2b3f5c" stroke-width="1" stroke-dasharray="1.6 1"/><path d="M1.2,1.2 V7.6 M3.6,10.6 H11.2" stroke="#2b3f5c" stroke-width="1"/><path d="M1.2,0 L2.4,1.8 L0,1.8 Z M12.6,10.6 L10.6,9.4 L10.6,11.8 Z" fill="#2b3f5c"/></svg>
<svg style="left:277.8px;top:623.6px" width="13" height="13" viewBox="0 0 13 13"><rect x="3.6" y="1.4" width="7.8" height="6.6" fill="#e8f0f8" stroke="#2b3f5c" stroke-width="1.1"/><path d="M1.2,1.2 V7.6 M3.6,10.6 H11.2" stroke="#2b3f5c" stroke-width="1"/><path d="M1.2,0 L2.4,1.8 L0,1.8 Z M12.6,10.6 L10.6,9.4 L10.6,11.8 Z" fill="#2b3f5c"/></svg>
<svg style="left:1074px;top:621px" width="124" height="16" viewBox="0 0 124 16"><circle cx="8" cy="7.6" r="6" fill="#ececec" stroke="#8a8a8a" stroke-width="1"/><path d="M4.6,7.6 H11.4" stroke="#4a4a4a" stroke-width="1.6"/><circle cx="115.2" cy="7.6" r="6" fill="#ececec" stroke="#8a8a8a" stroke-width="1"/><path d="M111.8,7.6 H118.6 M115.2,4.2 V11" stroke="#4a4a4a" stroke-width="1.6"/><path d="M24.4,6.4 H98" stroke="#b4b4b4" stroke-width="1"/><path d="M24.4,7.4 H98" stroke="#fdfdfd" stroke-width="1"/><path d="M57.8,0.8 H64 V10.4 L60.9,13.2 L57.8,10.4 Z" fill="#e9e9e9" stroke="#7d7d7d" stroke-width="1" stroke-linejoin="round"/></svg>
<div class="a" style="left:0;top:640px;width:1200px;height:35px;background:linear-gradient(90deg,#8196b4 0,#8499b7 50px,#a7c0de 76px,#a6c0de 897px,#8198b6 930px,#7c93b2 1200px)"></div>
<div class="a" style="left:0;top:640px;width:1200px;height:35px;background:linear-gradient(rgba(255,255,255,.10),rgba(255,255,255,0) 50%,rgba(0,0,20,.04))"></div>
<div class="a" style="left:0;top:640px;width:1200px;height:1px;background:rgba(70,90,120,.55)"></div>
<div class="a" style="left:0;top:641px;width:1200px;height:1px;background:rgba(255,255,255,.25)"></div>
<div class="a" style="left:162px;top:640.5px;width:51px;height:37px;box-sizing:border-box;border:1px solid rgba(70,90,125,.8);border-radius:2.5px;background:linear-gradient(135deg,rgba(255,255,255,.42),rgba(255,255,255,.22) 48%,rgba(255,255,255,.10) 52%,rgba(255,255,255,.18));box-shadow:inset 0 0 0 1px rgba(255,255,255,.5)"></div>
<div class="a" style="left:216px;top:640.5px;width:51px;height:37px;box-sizing:border-box;border:1px solid rgba(70,90,125,.8);border-radius:2.5px;background:linear-gradient(135deg,rgba(255,255,255,.42),rgba(255,255,255,.22) 48%,rgba(255,255,255,.10) 52%,rgba(255,255,255,.18));box-shadow:inset 0 0 0 1px rgba(255,255,255,.5)"></div>
<div class="a" style="left:270px;top:640.5px;width:52px;height:37px;box-sizing:border-box;border:1px solid rgba(70,90,125,.8);border-radius:2.5px;background:linear-gradient(135deg,rgba(255,255,255,.42),rgba(255,255,255,.22) 48%,rgba(255,255,255,.10) 52%,rgba(255,255,255,.18));box-shadow:inset 0 0 0 1px rgba(255,255,255,.5)"></div>
<div class="a" style="left:325px;top:640.5px;width:51px;height:37px;box-sizing:border-box;border:1px solid rgba(70,90,125,.8);border-radius:2.5px;background:linear-gradient(135deg,rgba(255,255,255,.42),rgba(255,255,255,.22) 48%,rgba(255,255,255,.10) 52%,rgba(255,255,255,.18));box-shadow:inset 0 0 0 1px rgba(255,255,255,.5)"></div>
<div class="a" style="left:488px;top:640.5px;width:52px;height:37px;box-sizing:border-box;border:1px solid rgba(70,90,125,.8);border-radius:2.5px;background:linear-gradient(135deg,rgba(255,255,255,.42),rgba(255,255,255,.22) 48%,rgba(255,255,255,.10) 52%,rgba(255,255,255,.18));box-shadow:inset 0 0 0 1px rgba(255,255,255,.5)"></div>
<div class="a" style="left:543px;top:640.5px;width:51px;height:37px;box-sizing:border-box;border:1px solid rgba(70,90,125,.8);border-radius:2.5px;background:linear-gradient(135deg,rgba(255,255,255,.42),rgba(255,255,255,.22) 48%,rgba(255,255,255,.10) 52%,rgba(255,255,255,.18));box-shadow:inset 0 0 0 1px rgba(255,255,255,.5)"></div>
<div class="a" style="left:597px;top:640.5px;width:51px;height:37px;box-sizing:border-box;border:1px solid rgba(70,90,125,.8);border-radius:2.5px;background:linear-gradient(135deg,rgba(255,255,255,.85),rgba(235,243,250,.75) 50%,rgba(215,230,243,.8));box-shadow:inset 0 0 0 1px rgba(255,255,255,.5)"></div>
<div class="a" style="left:1186.5px;top:641px;width:14px;height:36px;box-sizing:border-box;border:1px solid #4f627f;background:linear-gradient(90deg,rgba(40,55,85,.30),rgba(40,55,85,.42));box-shadow:inset 1px 1px 0 rgba(255,255,255,.35)"></div>
<div class="t " style="left:1140px;top:646px;font-size:10.2px;color:#fff">18:17</div>
<div class="t " style="left:1126px;top:661px;font-size:10.2px;color:#fff;letter-spacing:-0.1px">17/08/2017</div>
<svg style="left:0;top:640px" width="1200" height="35" viewBox="0 640 1200 35"><defs><radialGradient id="orb" cx="50%" cy="88%" r="75%"><stop offset="0" stop-color="#35d6f8"/><stop offset=".35" stop-color="#1478c0"/><stop offset=".7" stop-color="#0d4a8c"/><stop offset="1" stop-color="#0a3870"/></radialGradient><linearGradient id="orbhi" x1="0" y1="0" x2="0" y2="1"><stop offset="0" stop-color="#fff" stop-opacity=".75"/><stop offset="1" stop-color="#fff" stop-opacity=".12"/></linearGradient><radialGradient id="ff" cx="45%" cy="35%" r="65%"><stop offset="0" stop-color="#ffd83c"/><stop offset=".5" stop-color="#f08a1c"/><stop offset="1" stop-color="#d8501c"/></radialGradient><radialGradient id="spk" cx="50%" cy="50%" r="50%"><stop offset="0" stop-color="#8c8f94"/><stop offset=".45" stop-color="#c9cbce"/><stop offset=".8" stop-color="#e6e7e9"/><stop offset="1" stop-color="#9a9da2"/></radialGradient></defs><circle cx="24" cy="657.3" r="15.6" fill="url(#orb)" stroke="#3c6ea8" stroke-width="1"/><path d="M9.6,655 A14.6,14.6 0 0 1 38.4,655 C30,659 18,659 9.6,655 Z" fill="url(#orbhi)" opacity=".55"/><g transform="translate(24.4,657) scale(1.2) translate(-23.2,-657)"><path d="M17.4,650 C19.4,648.6 21.6,648.4 23.8,649.4 L22.4,656 C20.2,655 18,655.2 16,656.6 Z" fill="#ee5a24"/><path d="M25,650 C27.2,651 29.4,650.8 31.6,649.4 L30.2,656 C28,657.4 25.8,657.6 23.6,656.6 Z" fill="#7cb63c"/><path d="M15.6,658 C17.8,656.6 20,656.4 22.2,657.4 L20.8,664 C18.6,663 16.4,663.2 14.2,664.6 Z" fill="#2c8ce0"/><path d="M23.4,658 C25.6,659 27.8,658.8 30,657.4 L28.6,664 C26.4,665.4 24.2,665.6 22,664.6 Z" fill="#f8c020"/></g><path d="M68.6,648.4 L86.4,648.4 L89,649.6 L89,667.4 L86.4,668.2 L68.6,668.2 Z" fill="#8cc4e6" stroke="#6ca8cf" stroke-width=".7"/><path d="M66.4,648.6 H85.6 V668 H66.4 Z" fill="#a6d3ee" stroke="#76b0d6" stroke-width=".7"/><circle cx="75.4" cy="658" r="7.6" fill="#f4801c"/><circle cx="75.4" cy="656.4" r="6" fill="#f89a3c" opacity=".6"/><path d="M72.4,653.4 L80.6,658 L72.4,662.6 Z" fill="#fff"/><circle cx="132.6" cy="657.6" r="12.4" fill="none" stroke="#0fd870" stroke-width="2"/><ellipse cx="134.4" cy="657.6" rx="8.6" ry="11.6" fill="none" stroke="#0fd870" stroke-width="1.5"/><path d="M138.2,650.6 C140,654.6 140,660.6 138.2,664.6" stroke="#0fd870" stroke-width="1.4" fill="none"/><rect x="173" y="643.8" width="28" height="27.4" rx="4.4" fill="#f3f5f7"/><circle cx="187" cy="657.2" r="12.2" fill="#1c98d6"/><circle cx="187" cy="656" r="9.2" fill="none" stroke="#fff" stroke-width="1.2"/><circle cx="187" cy="656" r="6.8" fill="none" stroke="#fff" stroke-width="1.2"/><circle cx="187" cy="655.4" r="4.4" fill="#fff"/><path d="M184.2,660.4 H189.8 V664.4 Q187,667.2 184.2,664.4 Z" fill="#fff"/><path d="M176,662 Q187,675 198,662 L196.6,665.4 Q187,673.6 177.4,665.4 Z" fill="#1c98d6"/><circle cx="242" cy="657" r="13.2" fill="url(#ff)"/><circle cx="244" cy="655.2" r="9.4" fill="#1f5cc0"/><circle cx="244.6" cy="652.4" r="5.6" fill="#4c98e4" opacity=".85"/><path d="M229,655.4 C229,651 231,647.6 234.2,645.6 C233.8,647.6 234.6,649 236,650 C238,649 240.6,649.6 242,651.4 L239.4,653 C238.2,653.6 238,655 238.8,656 C239.6,657 241.4,656.8 242.4,656.2 C242,658.6 243.6,660 245.6,660 C247.6,660 249.2,659 250,657.6 C250.4,661 248,664.6 244,665.6 C239.4,666.8 234,664.8 231,661.4 C229.6,659.6 229,657.6 229,655.4 Z" fill="#e8601c"/><path d="M230,652 C230.6,649.4 232,647.2 234.2,645.6 C233.8,647.6 234.6,649 236,650 C237,649.6 238,649.4 239,649.6 C236,650.6 233,652.4 231.4,655.4 Z" fill="#f89a2c"/><path d="M251.4,647.4 C255,651 256.4,656.4 254.6,661.4 C252.8,666.4 248,669.8 242.6,670.2 C248,668.4 251.6,664 252.2,658.4 C252.6,654.2 252.2,650.6 251.4,647.4 Z" fill="#fcd040"/><path d="M283,648.4 L295.6,648.4 L297.6,650.6 L309.4,650.6 L309.4,668.6 L283,668.6 Z" fill="#f0d27c" stroke="#c9a44c" stroke-width=".8"/><path d="M283,653.4 H309.4 V668.6 H283 Z" fill="#f8e6a4" stroke="#d4b460" stroke-width=".6"/><rect x="285" y="649.2" width="3" height="1.6" fill="#38b048"/><rect x="293" y="649.6" width="3" height="1.6" fill="#e03828"/><rect x="300" y="651" width="3" height="1.6" fill="#2c8ce0"/><path d="M286.4,670.6 L286.4,662.4 Q286.4,660 288.8,660 L303.6,660 Q306,660 306,662.4 L306,670.6 L301,670.6 L301,664.6 L291.4,664.6 L291.4,670.6 Z" fill="#7cb8e4" stroke="#4c8cc4" stroke-width=".7"/><circle cx="350.4" cy="657.4" r="13.2" fill="#e8402c"/><path d="M350.4,657.4 L338.9,650.8 A13.2,13.2 0 0 0 350.4,670.6 L356.4,660.4 Z" fill="#2ca84c"/><path d="M350.4,657.4 L356.4,660.4 L350.4,670.6 A13.2,13.2 0 0 0 361.9,650.8 L350.4,650.8 Z" fill="#fcc820"/><circle cx="350.4" cy="657.4" r="6" fill="#fff"/><circle cx="350.4" cy="657.4" r="4.8" fill="#3c82f0"/><rect x="393.2" y="645" width="23.6" height="22" fill="#2e0c0e" stroke="#e8201c" stroke-width="1.4"/><path d="M398.6,662.6 C400,659 404,654 404.6,649.8 C404.8,648.2 403,648.2 403.2,650 C403.8,654 408,658.6 411.6,659 C413,659 412.6,657.6 411,657.6 C406.6,657.6 401,660 398.6,662.6 Z" fill="none" stroke="#fff" stroke-width="1.1"/><path d="M449,669.8 L451.4,664 L467.4,664 L470,669.8 Z" fill="#f08a1c" stroke="#d87010" stroke-width=".5"/><path d="M459.4,644.4 Q458,644.4 457.6,645.6 L451.8,664.4 Q459.4,667.6 467,664.4 L461.2,645.6 Q460.8,644.4 459.4,644.4 Z" fill="#f58a1c"/><path d="M456.2,650.4 Q459.4,651.8 462.6,650.4 L463.9,654.8 Q459.4,656.6 454.9,654.8 Z" fill="#f4f4f4"/><path d="M453.6,659 Q459.4,661.2 465.2,659 L466.4,663 Q459.4,665.6 452.4,663 Z" fill="#f4f4f4"/><circle cx="514.2" cy="659.4" r="10.6" fill="#fc0004"/><rect x="512.4" y="645.6" width="3.6" height="4" fill="#fc0004"/><rect x="510.2" y="644.4" width="8" height="2" fill="#fc0004"/><path d="M503.6,651.6 L506.6,648.4 L508.8,650.6 L505.8,653.8 Z M524.8,651.6 L521.8,648.4 L519.6,650.6 L522.6,653.8 Z" fill="#fc0004"/><rect x="513.4" y="651.6" width="1.8" height="7.4" fill="#fff"/><path d="M570,646.4 L577,649.6 Q581.6,651 581.6,657.8 Q581.6,664.6 577,666 L570,669.2 Z" fill="#8e9094" stroke="#6c6e72" stroke-width=".6"/><path d="M576.4,650 V665.6 M578.8,651 V664.6" stroke="#b4b6ba" stroke-width=".8"/><ellipse cx="566.4" cy="657.8" rx="10.8" ry="12.6" fill="url(#spk)" stroke="#808286" stroke-width=".9"/><ellipse cx="567" cy="657.8" rx="7.8" ry="9.4" fill="none" stroke="#a6a8ac" stroke-width="1.2"/><ellipse cx="568" cy="658" rx="3.6" ry="4.4" fill="#9c9ea2" stroke="#7c7e84" stroke-width=".5"/><ellipse cx="567.2" cy="656.8" rx="1.6" ry="2" fill="#c4c6ca"/><path d="M621.6,649 C614,649.4 609,654.4 609.6,660.2 C610,665.4 615,667.6 618.4,665.6 C620.8,664 622.6,665.2 623.4,667.2 C624.6,670.2 630,669.4 632.4,665 C635.4,659.4 633,648.6 621.6,649 Z" fill="#d2e6f5" stroke="#5c9cd0" stroke-width="1.1"/><path d="M613,657 C614.6,653 618.6,650.8 623,650.6 C619,652 616,654.6 614.8,658.6 Z" fill="#f4f9fd" opacity=".8"/><circle cx="615.4" cy="659" r="2.3" fill="#e04c3c"/><circle cx="620" cy="654.2" r="2.2" fill="#5cb848"/><circle cx="626" cy="653" r="2.2" fill="#f0b428"/><circle cx="622.6" cy="661" r="2" fill="#b8d6ee" stroke="#7cacd4" stroke-width=".6"/><path d="M631.4,643.6 L637,644.8 L634,651.6 L631.4,651 Z" fill="#d4a464"/><path d="M630.8,650.8 L633.8,651.6 L625,671 Q623.6,671.8 623.2,670.6 Z" fill="#e8781c"/><path d="M631,651 L633.6,651.6 L633,653.2 L630.4,652.6 Z" fill="#b4b8bc"/><rect x="970" y="654.8" width="26.4" height="14" rx="1" fill="#f4eea4" stroke="#98a2ae" stroke-width="1.6"/><path d="M972,664.6 H994" stroke="#c8c088" stroke-width=".8"/><path d="M975.4,659.4 C977.4,657.6 977.4,662.6 976,663.6 C977.6,663.6 978.4,662.6 978.8,661.6" stroke="#7c3c9c" stroke-width=".9" fill="none"/><path d="M982.6,665 L984,661.4 L994.4,644.8 L996,645.8 L986,662.8 Z" fill="#1c2430"/><path d="M986,657.4 L990,651" stroke="#5c7ca8" stroke-width="1"/><path d="M1036.4,660.6 L1039.6,656.4 L1042.8,660.6 Z" fill="#fff"/><path d="M1055,652.4 L1055,664.4 L1061,664.4 M1055,652.4 L1058,650.6 L1058,652.4" fill="none" stroke="#fff" stroke-width="1.2"/><path d="M1058.4,653.4 H1066.4 V657.6 Q1066.4,660.4 1062.4,660.4 Q1058.4,660.4 1058.4,657.6 Z" fill="#fff"/><path d="M1060.2,650.6 V653.4 M1064.6,650.6 V653.4 M1062.4,660.4 V664.6" stroke="#fff" stroke-width="1.3"/><rect x="1059.6" y="654.8" width="5.6" height="1.6" fill="#7c93b2"/><path d="M1075.4,655.6 H1078 L1081.6,651.6 V664.8 L1078,660.8 H1075.4 Z" fill="#fff" stroke="#e8eef6" stroke-width=".5"/><path d="M1083.6,655 Q1085.4,658.2 1083.6,661.4 M1085.8,653.2 Q1088.6,658.2 1085.8,663.2" fill="none" stroke="#fff" stroke-width="1"/><rect x="1100.4" y="653.4" width="9.6" height="8" fill="#8ea4c2" stroke="#fff" stroke-width="1.1"/><path d="M1102,664.8 H1109" stroke="#fff" stroke-width="1.2"/><path d="M1096.6,651 V653.6 M1099.6,651 V653.6" stroke="#fff" stroke-width="1"/><path d="M1095.8,653.6 H1100.4 V657 Q1098.1,659 1095.8,657 Z" fill="#fff"/><path d="M1098.1,658 V664.4 H1101" stroke="#fff" stroke-width="1" fill="none"/></svg>

</body></html>
